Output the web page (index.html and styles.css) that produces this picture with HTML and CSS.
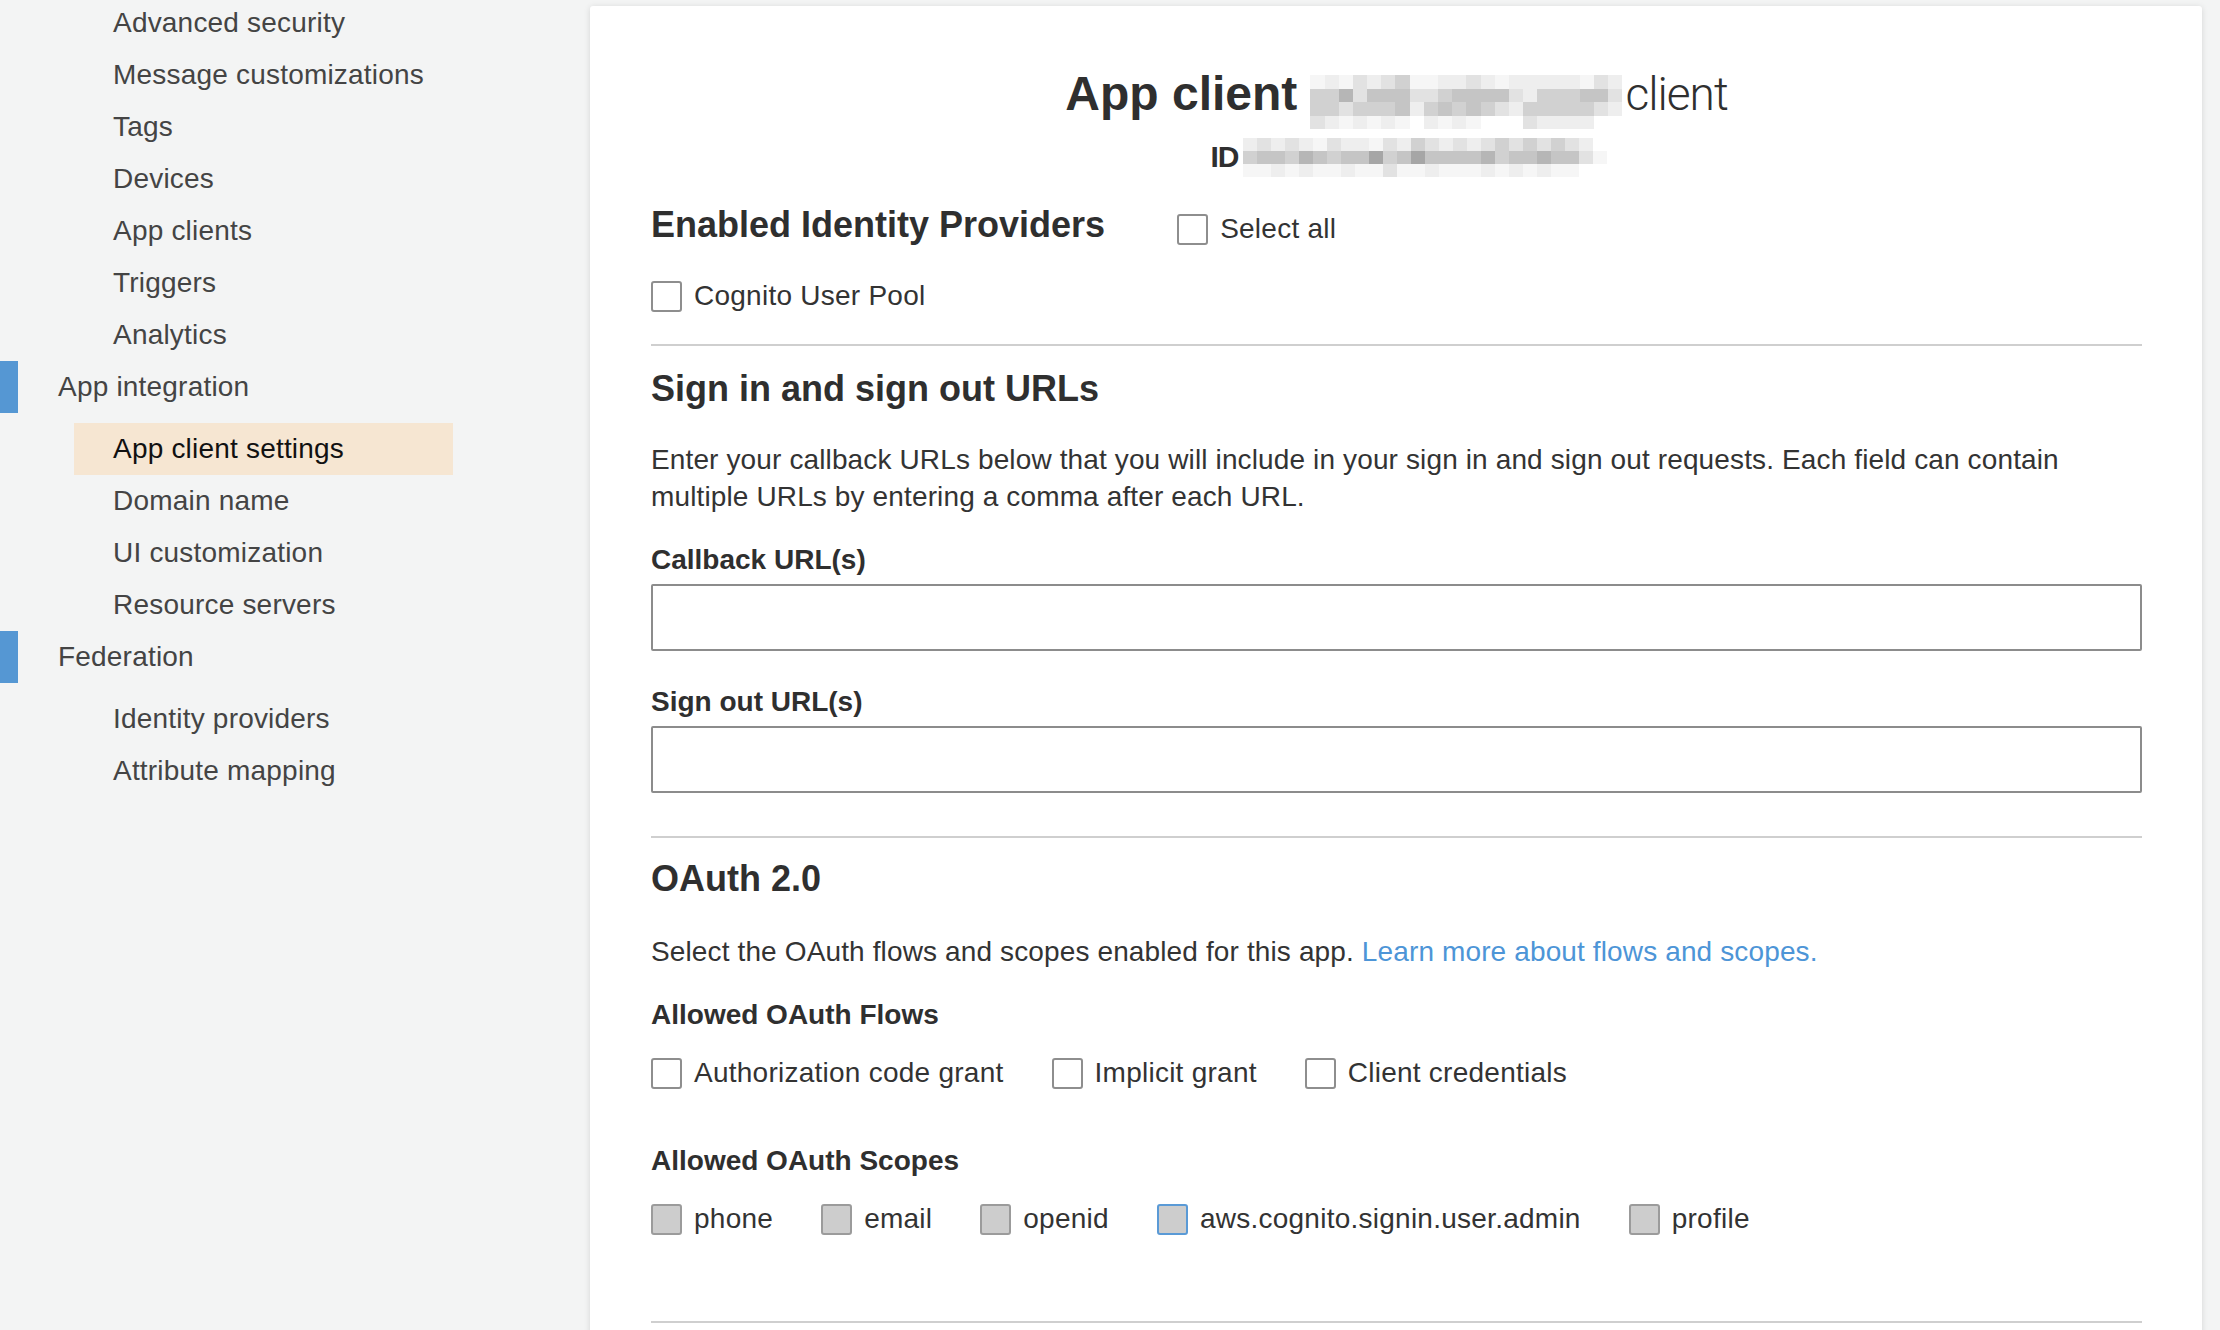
FILE: index.html
```html
<!DOCTYPE html>
<html lang="en">
<head>
<meta charset="utf-8">
<title>App client settings</title>
<link rel="stylesheet" href="styles.css">
</head>
<body>
<div class="page">
  <aside class="sidebar">
    <ul class="nav-sub first">
      <li>Advanced security</li>
      <li>Message customizations</li>
      <li>Tags</li>
      <li>Devices</li>
      <li>App clients</li>
      <li>Triggers</li>
      <li>Analytics</li>
    </ul>
    <div class="nav-group">App integration</div>
    <ul class="nav-sub">
      <li class="selected">App client settings</li>
      <li>Domain name</li>
      <li>UI customization</li>
      <li>Resource servers</li>
    </ul>
    <div class="nav-group">Federation</div>
    <ul class="nav-sub">
      <li>Identity providers</li>
      <li>Attribute mapping</li>
    </ul>
  </aside>

  <main class="card">
    <h1 class="title">
      <span class="title-bold">App client</span>
      <span class="mosaic title-mosaic" aria-hidden="true">
        <i class="a"></i><i class="b"></i><i class="a"></i><i class="c"></i><i class="b"></i><i class="c"></i><i class="d"></i><i class="a"></i><i class="a"></i><i class="b"></i><i class="b"></i><i class="c"></i><i class="b"></i><i class="a"></i><i class="b"></i><i class="b"></i><i class="b"></i><i class="b"></i><i class="b"></i><i class="a"></i><i class="c"></i><i class="b"></i>
        <i class="d"></i><i class="d"></i><i class="f"></i><i class="c"></i><i class="e"></i><i class="e"></i><i class="e"></i><i class="c"></i><i class="c"></i><i class="d"></i><i class="e"></i><i class="e"></i><i class="e"></i><i class="e"></i><i class="c"></i><i class="b"></i><i class="d"></i><i class="d"></i><i class="d"></i><i class="e"></i><i class="e"></i><i class="c"></i>
        <i class="d"></i><i class="d"></i><i class="c"></i><i class="d"></i><i class="d"></i><i class="d"></i><i class="e"></i><i class="b"></i><i class="d"></i><i class="e"></i><i class="d"></i><i class="e"></i><i class="d"></i><i class="c"></i><i class="b"></i><i class="d"></i><i class="d"></i><i class="d"></i><i class="d"></i><i class="d"></i><i class="c"></i><i class="b"></i>
        <i class="c"></i><i class="b"></i><i class="a"></i><i class="b"></i><i class="a"></i><i class="b"></i><i class="a"></i><i class="w"></i><i class="b"></i><i class="a"></i><i class="b"></i><i class="a"></i><i class="w"></i><i class="w"></i><i class="w"></i><i class="c"></i><i class="b"></i><i class="b"></i><i class="b"></i><i class="b"></i><i class="w"></i><i class="w"></i>
      </span>
      <span class="title-light">client</span>
    </h1>
    <div class="id-row">
      <span class="id-label">ID</span>
      <span class="mosaic id-mosaic" aria-hidden="true">
        <i class="b"></i><i class="c"></i><i class="b"></i><i class="c"></i><i class="b"></i><i class="a"></i><i class="c"></i><i class="b"></i><i class="b"></i><i class="a"></i><i class="c"></i><i class="b"></i><i class="d"></i><i class="c"></i><i class="b"></i><i class="c"></i><i class="b"></i><i class="c"></i><i class="d"></i><i class="c"></i><i class="d"></i><i class="c"></i><i class="d"></i><i class="c"></i><i class="b"></i><i class="w"></i>
        <i class="d"></i><i class="e"></i><i class="e"></i><i class="d"></i><i class="f"></i><i class="e"></i><i class="d"></i><i class="e"></i><i class="e"></i><i class="g"></i><i class="d"></i><i class="e"></i><i class="g"></i><i class="e"></i><i class="e"></i><i class="e"></i><i class="e"></i><i class="f"></i><i class="d"></i><i class="e"></i><i class="e"></i><i class="f"></i><i class="e"></i><i class="e"></i><i class="c"></i><i class="a"></i>
        <i class="a"></i><i class="a"></i><i class="b"></i><i class="a"></i><i class="b"></i><i class="a"></i><i class="a"></i><i class="b"></i><i class="a"></i><i class="a"></i><i class="c"></i><i class="a"></i><i class="a"></i><i class="b"></i><i class="a"></i><i class="a"></i><i class="a"></i><i class="b"></i><i class="a"></i><i class="b"></i><i class="a"></i><i class="b"></i><i class="a"></i><i class="a"></i><i class="w"></i><i class="w"></i>
      </span>
    </div>

    <section class="providers">
      <div class="providers-head">
        <h2 class="heading">Enabled Identity Providers</h2>
        <label class="check select-all"><span class="box"></span>Select all</label>
      </div>
      <div class="check-row">
        <label class="check"><span class="box"></span>Cognito User Pool</label>
      </div>
    </section>

    <hr class="divider">

    <section class="urls">
      <h2 class="heading">Sign in and sign out URLs</h2>
      <p class="text">Enter your callback URLs below that you will include in your sign in and sign out requests. Each field can contain<br>multiple URLs by entering a comma after each URL.</p>
      <div class="field">
        <div class="label">Callback URL(s)</div>
        <div class="input"></div>
      </div>
      <div class="field second">
        <div class="label">Sign out URL(s)</div>
        <div class="input"></div>
      </div>
    </section>

    <hr class="divider oauth-divider">

    <section class="oauth">
      <h2 class="heading">OAuth 2.0</h2>
      <p class="text">Select the OAuth flows and scopes enabled for this app. <a class="link" href="#">Learn more about flows and scopes.</a></p>
      <div class="label flows-label">Allowed OAuth Flows</div>
      <div class="check-row options">
        <label class="check"><span class="box"></span>Authorization code grant</label>
        <label class="check"><span class="box"></span>Implicit grant</label>
        <label class="check"><span class="box"></span>Client credentials</label>
      </div>
      <div class="label scopes-label">Allowed OAuth Scopes</div>
      <div class="check-row options">
        <label class="check"><span class="box disabled"></span>phone</label>
        <label class="check"><span class="box disabled"></span>email</label>
        <label class="check"><span class="box disabled"></span>openid</label>
        <label class="check"><span class="box disabled focus"></span>aws.cognito.signin.user.admin</label>
        <label class="check"><span class="box disabled"></span>profile</label>
      </div>
    </section>

    <hr class="divider last-divider">
  </main>
</div>
</body>
</html>
```

FILE: styles.css
```css
html, body {
  margin: 0;
  padding: 0;
  height: 100%;
  overflow: hidden;
}

body {
  background: #f3f4f4;
  font-family: "Liberation Sans", Arial, Helvetica, sans-serif;
  color: #333;
}

.page {
  display: flex;
  align-items: flex-start;
}

/* ---------- Sidebar ---------- */
.sidebar {
  flex: 0 0 590px;
  margin-top: -3px;
  font-size: 28px;
  letter-spacing: 0.2px;
  color: #444;
}

.nav-sub {
  list-style: none;
  margin: 10px 0 0 0;
  padding: 0;
}

.nav-sub.first {
  margin-top: 0;
}

.nav-sub li {
  box-sizing: border-box;
  width: 379px;
  height: 52px;
  line-height: 52px;
  margin-left: 74px;
  padding-left: 39px;
  white-space: nowrap;
}

.nav-sub li.selected {
  background: #f6e6d2;
  color: #111;
}

.nav-group {
  height: 52px;
  line-height: 52px;
  border-left: 18px solid #5597d3;
  padding-left: 40px;
}

/* ---------- Card ---------- */
.card {
  flex: 1;
  margin: 6px 18px 0 0;
  height: 1400px;
  background: #fff;
  border-radius: 3px;
  box-shadow: 0 1px 6px rgba(0, 0, 0, 0.13);
  padding: 58px 60px 0 61px;
  box-sizing: border-box;
}

.title {
  display: flex;
  justify-content: center;
  align-items: flex-start;
  margin: 0;
  height: 60px;
  line-height: 60px;
  font-size: 48px;
  color: #2f2f2f;
}

.title-bold {
  font-weight: 700;
  margin-right: 13px;
}

.title-light {
  font-family: Roboto, "Liberation Sans", sans-serif;
  font-weight: 300;
  font-size: 46px;
  letter-spacing: -1px;
  margin-left: 3px;
}

.mosaic {
  display: grid;
}

.mosaic i {
  display: block;
}

.title-mosaic {
  grid-template-columns: repeat(22, 14.2px);
  grid-auto-rows: 13.5px;
  margin-top: 11px;
}

.id-row {
  display: flex;
  justify-content: center;
  align-items: center;
  height: 40px;
  margin-top: 13px;
  padding-left: 24px;
}

.id-label {
  font-weight: 700;
  font-size: 30px;
  letter-spacing: -1px;
  color: #2f2f2f;
  margin-right: 4px;
}

.id-mosaic {
  grid-template-columns: repeat(26, 14px);
  grid-auto-rows: 13px;
}

.mosaic .w { background: #ffffff; }
.mosaic .a { background: #f6f6f6; }
.mosaic .b { background: #eeeeee; }
.mosaic .c { background: #e2e2e2; }
.mosaic .d { background: #d1d1d1; }
.mosaic .e { background: #c5c5c5; }
.mosaic .f { background: #b6b6b6; }
.mosaic .g { background: #a6a6a6; }

/* ---------- Sections ---------- */
.heading {
  margin: 0;
  font-size: 36px;
  font-weight: 700;
  line-height: 48px;
  height: 48px;
  color: #2f2f2f;
}

.providers {
  margin-top: 24px;
}

.providers-head {
  display: flex;
  align-items: center;
}

.select-all {
  margin-left: 72px;
  padding-top: 8px;
}

.check-row {
  display: flex;
  align-items: center;
  height: 40px;
  margin-top: 27px;
}

.check {
  display: flex;
  align-items: center;
  font-size: 28px;
  line-height: 40px;
  letter-spacing: 0.25px;
  color: #333;
  margin-right: 48px;
  white-space: nowrap;
}

.box {
  box-sizing: border-box;
  width: 31px;
  height: 31px;
  border: 2px solid #8e8e8e;
  border-radius: 3px;
  background: #fff;
  margin-right: 12px;
  flex: 0 0 auto;
}

.box.disabled {
  background: #cdcdcd;
  border-color: #9b9b9b;
}

.box.focus {
  border-color: #5a9ad6;
}

.divider {
  border: 0;
  height: 2px;
  background: #cfcfcf;
  margin: 28px 0 0 0;
}

.urls .heading {
  margin-top: 19px;
}

.text {
  margin: 28px 0 0 0;
  font-size: 28px;
  line-height: 37px;
  letter-spacing: 0.13px;
  color: #333;
}

.link {
  color: #4d95d7;
  text-decoration: none;
}

.label {
  font-size: 28px;
  font-weight: 700;
  line-height: 40px;
  height: 40px;
  color: #2f2f2f;
}

.field {
  margin-top: 25px;
}

.field.second {
  margin-top: 31px;
}

.input {
  box-sizing: border-box;
  height: 67px;
  margin-top: 4px;
  border: 2px solid #8c8c8c;
  border-radius: 2px;
  background: #fff;
}

.oauth-divider {
  margin-top: 43px;
}

.oauth .heading {
  margin-top: 17px;
}

.oauth .text {
  margin-top: 30px;
}

.flows-label {
  margin-top: 25px;
}

.options {
  margin-top: 18px;
}

.scopes-label {
  margin-top: 48px;
}

.last-divider {
  margin-top: 82px;
}
```
